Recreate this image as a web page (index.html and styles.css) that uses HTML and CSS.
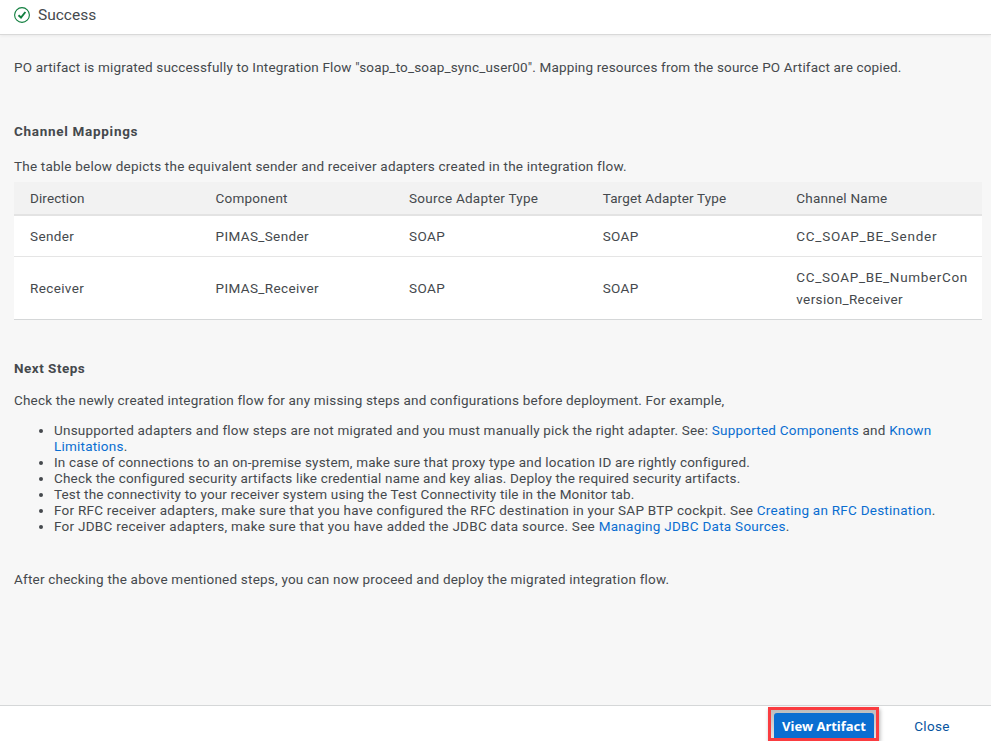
FILE: index.html
```
<!DOCTYPE html>
<html lang="en">
<head>
<meta charset="utf-8">
<title>Success</title>
<link rel="stylesheet" href="styles.css">
</head>
<body>
<div class="dialog">
  <header class="header">
    <svg class="status" viewBox="0 0 16 16" width="16" height="16"><circle cx="8" cy="8" r="7.4" fill="none" stroke="#107e3e" stroke-width="1.1"/><path d="M4.5 8.2 L7 10.5 L11.4 5" fill="none" stroke="#107e3e" stroke-width="1.9"/></svg>
    <h1 class="title">Success</h1>
  </header>
  <main class="content">
    <p class="intro">PO artifact is migrated successfully to Integration Flow "soap_to_soap_sync_user00". Mapping resources from the source PO Artifact are copied.</p>
    <h2 class="channels">Channel Mappings</h2>
    <p class="caption">The table below depicts the equivalent sender and receiver adapters created in the integration flow.</p>
    <table class="table">
      <thead><tr><th class="first">Direction</th><th>Component</th><th>Source Adapter Type</th><th class="target">Target Adapter Type</th><th class="last">Channel Name</th></tr></thead>
      <tbody>
        <tr class="sender"><td>Sender</td><td>PIMAS_Sender</td><td>SOAP</td><td>SOAP</td><td class="wide">CC_SOAP_BE_Sender</td></tr>
        <tr class="receiver"><td>Receiver</td><td>PIMAS_Receiver</td><td>SOAP</td><td>SOAP</td><td><span class="long">CC_SOAP_BE_NumberCon</span><br>version_Receiver</td></tr>
      </tbody>
    </table>
    <h2 class="next">Next Steps</h2>
    <p class="check">Check the newly created integration flow for any missing steps and configurations before deployment. For example,</p>
    <ul class="steps">
      <li class="unsupported">Unsupported adapters and flow steps are not migrated and you must manually pick the right adapter. See: <a>Supported Components</a> and <a>Known<br>Limitations</a>.</li>
      <li class="premise">In case of connections to an on-premise system, make sure that proxy type and location ID are rightly configured.</li>
      <li class="security">Check the configured security artifacts like credential name and key alias. Deploy the required security artifacts.</li>
      <li class="connectivity">Test the connectivity to your receiver system using the Test Connectivity tile in the Monitor tab.</li>
      <li class="rfc">For RFC receiver adapters, make sure that you have configured the RFC destination in your SAP BTP cockpit. See <a>Creating an RFC Destination</a>.</li>
      <li class="jdbc">For JDBC receiver adapters, make sure that you have added the JDBC data source. See <a>Managing JDBC Data Sources</a>.</li>
    </ul>
    <p class="after">After checking the above mentioned steps, you can now proceed and deploy the migrated integration flow.</p>
  </main>
  <footer class="footer">
    <div class="highlight"><button class="primary">View Artifact</button></div>
    <button class="close">Close</button>
  </footer>
</div>
</body>
</html>
```
FILE: styles.css
```
* { box-sizing: border-box; }
body { margin: 0; font: 13.5px/16px Roboto, "Liberation Sans", sans-serif; color: #45494d; }
p, h1, h2, ul { margin: 0; }
.dialog { display: flex; flex-direction: column; width: 991px; height: 741px; overflow: hidden; background: #f7f7f7; }
.header { display: flex; align-items: center; gap: 8px; height: 35px; padding: 0 14px 5px; background: #fff; border-bottom: 1px solid #d9d9d9; box-shadow: 0 1px 3px rgba(0,0,0,.06); }
.title { font-size: 15.5px; font-weight: 400; line-height: 20px; letter-spacing: 0; }
.content { flex: 1; padding: 24px 9px 0 14px; white-space: nowrap; }
h2 { font-size: 13.5px; font-weight: 700; line-height: 16px; }
.intro { letter-spacing: 0.162px; }
.channels { margin-top: 48px; letter-spacing: 0.7px; }
.caption { margin-top: 19px; letter-spacing: 0.212px; }
.table { width: 968px; margin-top: 8px; table-layout: fixed; border-collapse: separate; border-spacing: 0; background: #fff; }
th, td { padding: 0 0 0 16px; text-align: left; font-weight: 400; vertical-align: middle; line-height: 22px; letter-spacing: 0.37px; }
th { width: 193.6px; height: 34px; background: #f2f2f2; border-bottom: 2px solid #e3e3e3; letter-spacing: 0.24px; }
.first { width: 185.5px; letter-spacing: 0.1px; }
.target { letter-spacing: 0.14px; }
.last { width: 201.7px; }
.wide { letter-spacing: 0.74px; }
.long { letter-spacing: 0.65px; }
.sender td { height: 41px; border-bottom: 1px solid #e5e5e5; }
.receiver td { height: 63px; border-bottom: 1px solid #d5d7d8; }
.next { margin-top: 40px; letter-spacing: 0.5px; }
.check { margin-top: 16px; letter-spacing: 0.178px; }
.steps { margin-top: 14px; padding-left: 40px; }
.unsupported { letter-spacing: 0.217px; }
.premise { letter-spacing: 0.19px; }
.security { letter-spacing: 0.17px; }
.connectivity { letter-spacing: 0.155px; }
.rfc { letter-spacing: 0.25px; }
.jdbc { letter-spacing: 0.27px; }
a { color: #0a6ed1; }
.after { margin-top: 37px; letter-spacing: 0.21px; }
.footer { display: flex; height: 36px; padding: 1px 0 0 768px; background: #fff; border-top: 1px solid #d5d7d8; }
button { border: 0; padding: 0; font: inherit; }
.highlight { width: 111px; height: 34px; padding: 3px; border: 3px solid #fa3c40; background: linear-gradient(#bdbdbd, #e2e2e2); box-shadow: 1px 2px 4px rgba(0,0,0,.3); }
.primary { display: block; width: 100px; height: 25px; background: #0a6ed1; color: #fff; border-radius: 3px 3px 0 0; font: 700 13px/27px "Noto Sans", sans-serif; letter-spacing: 0; }
.close { width: 76px; height: 38px; margin-left: 15px; background: none; color: #0854a0; letter-spacing: 0.35px; }
```
